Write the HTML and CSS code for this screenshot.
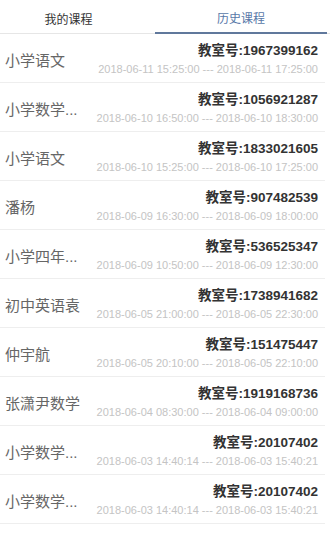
FILE: index.html
```html
<!DOCTYPE html>
<html lang="zh-CN">
<head>
    <meta charset="UTF-8">
    <meta name="viewport" content="width=device-width, initial-scale=1.0">
    <title>历史课程</title>
    <link rel="stylesheet" href="styles.css">
</head>
<body>
    <div class="tabs">
        <div class="tab">我的课程</div>
        <div class="tab active">历史课程</div>
    </div>
    <ul class="lessons">
        <li class="lesson">
            <span class="name">小学语文</span>
            <div class="info">
                <div class="room">教室号:1967399162</div>
                <div class="time">2018-06-11 15:25:00 --- 2018-06-11 17:25:00</div>
            </div>
        </li>
        <li class="lesson">
            <span class="name">小学数学...</span>
            <div class="info">
                <div class="room">教室号:1056921287</div>
                <div class="time">2018-06-10 16:50:00 --- 2018-06-10 18:30:00</div>
            </div>
        </li>
        <li class="lesson">
            <span class="name">小学语文</span>
            <div class="info">
                <div class="room">教室号:1833021605</div>
                <div class="time">2018-06-10 15:25:00 --- 2018-06-10 17:25:00</div>
            </div>
        </li>
        <li class="lesson">
            <span class="name">潘杨</span>
            <div class="info">
                <div class="room">教室号:907482539</div>
                <div class="time">2018-06-09 16:30:00 --- 2018-06-09 18:00:00</div>
            </div>
        </li>
        <li class="lesson">
            <span class="name">小学四年...</span>
            <div class="info">
                <div class="room">教室号:536525347</div>
                <div class="time">2018-06-09 10:50:00 --- 2018-06-09 12:30:00</div>
            </div>
        </li>
        <li class="lesson">
            <span class="name">初中英语袁</span>
            <div class="info">
                <div class="room">教室号:1738941682</div>
                <div class="time">2018-06-05 21:00:00 --- 2018-06-05 22:30:00</div>
            </div>
        </li>
        <li class="lesson">
            <span class="name">仲宇航</span>
            <div class="info">
                <div class="room">教室号:151475447</div>
                <div class="time">2018-06-05 20:10:00 --- 2018-06-05 22:10:00</div>
            </div>
        </li>
        <li class="lesson">
            <span class="name">张潇尹数学</span>
            <div class="info">
                <div class="room">教室号:1919168736</div>
                <div class="time">2018-06-04 08:30:00 --- 2018-06-04 09:00:00</div>
            </div>
        </li>
        <li class="lesson">
            <span class="name">小学数学...</span>
            <div class="info">
                <div class="room">教室号:20107402</div>
                <div class="time">2018-06-03 14:40:14 --- 2018-06-03 15:40:21</div>
            </div>
        </li>
        <li class="lesson">
            <span class="name">小学数学...</span>
            <div class="info">
                <div class="room">教室号:20107402</div>
                <div class="time">2018-06-03 14:40:14 --- 2018-06-03 15:40:21</div>
            </div>
        </li>
    </ul>
</body>
</html>
```

FILE: styles.css
```css
body {
    font-family: "Liberation Sans", "Noto Sans CJK SC", sans-serif;
    background-color: #fff;
    margin: 0;
    color: #333;
}

.tabs {
    display: grid;
    grid-template-columns: 155px 1fr;
    height: 33px;
    padding-right: 3px;
    border-bottom: 1px solid #e6e6e6;
}

.tab {
    display: flex;
    justify-content: center;
    align-items: center;
    font-size: 12px;
    color: #333;
    padding-top: 3px;
}

.tab:first-child {
    padding-right: 18px;
}

.tab.active {
    color: #5878a8;
    border-bottom: 2px solid #60789c;
    margin-bottom: -1px;
}

.lessons {
    list-style: none;
    margin: 0 5px 0 0;
    padding: 0;
}

.lesson {
    display: flex;
    align-items: center;
    height: 48px;
    padding: 0 7px 0 5px;
    border-bottom: 1px solid #eeeeee;
}

.name {
    font-size: 15px;
    color: #666;
    white-space: nowrap;
    padding-top: 2px;
}

.info {
    margin-left: auto;
    text-align: right;
    padding-top: 1px;
}

.room {
    font-size: 13.5px;
    font-weight: bold;
    color: #333;
    line-height: 18px;
}

.time {
    font-size: 11px;
    color: #c4c4c4;
    line-height: 14px;
    margin-top: 2px;
}
```
